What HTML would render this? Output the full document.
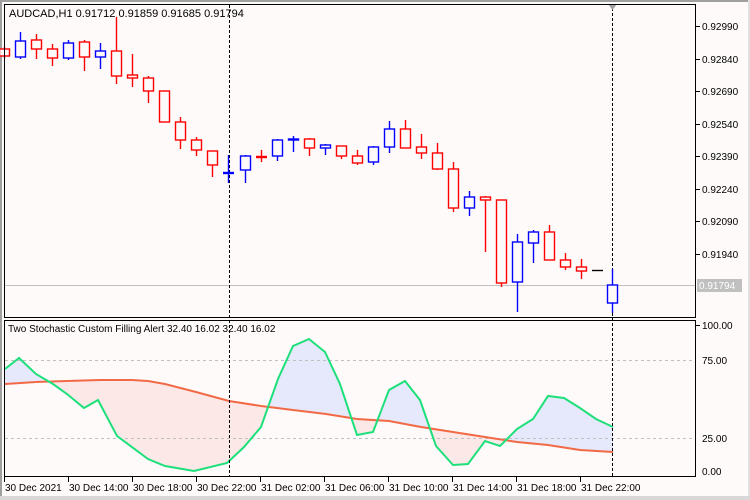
<!DOCTYPE html>
<html><head><meta charset="utf-8"><style>
html,body{margin:0;padding:0;background:#fffafa;}
svg{display:block;font-family:"Liberation Sans","DejaVu Sans",sans-serif;}
</style></head><body>
<svg width="750" height="500" xmlns="http://www.w3.org/2000/svg">
<rect width="750" height="500" fill="#fffafa"/>
<rect x="0" y="0" width="750" height="2" fill="#a0a0a0"/>
<rect x="0" y="0" width="2" height="500" fill="#a0a0a0"/>
<rect x="748" y="0" width="2" height="500" fill="#e0e0e0"/>
<rect x="0" y="496" width="750" height="4" fill="#d8d8d8"/>
<line x1="5" y1="285.5" x2="695" y2="285.5" stroke="#c0c0c0"/>
<!-- indicator -->
<defs>
<clipPath id="above"><polygon id="ab" points=""/></clipPath>
<clipPath id="below"><polygon id="bl" points=""/></clipPath>
</defs>
<polygon id="fillB" fill="#e6e8fb" clip-path="url(#above)" points=""/>
<polygon id="fillR" fill="#fde8e8" clip-path="url(#below)" points=""/>
<line x1="5" y1="360.5" x2="695" y2="360.5" stroke="#c0c0c0" stroke-dasharray="3,3"/>
<line x1="5" y1="438.5" x2="695" y2="438.5" stroke="#c0c0c0" stroke-dasharray="3,3"/>
<polyline id="red" fill="none" stroke="#f26a45" stroke-width="2" points=""/>
<polyline id="grn" fill="none" stroke="#1de07a" stroke-width="2" points=""/>
<!-- vertical dashed -->
<line x1="229.5" y1="5" x2="229.5" y2="476" stroke="#000" stroke-dasharray="3,2"/>
<line x1="612.5" y1="8" x2="612.5" y2="476" stroke="#000" stroke-dasharray="3,2"/>
<polygon points="608,4 617,4 612.5,10" fill="#a0a0a0"/>
<!-- candles -->
<g stroke-width="1.4" fill="none" id="c"></g>
<!-- frames -->
<rect x="4.5" y="4.5" width="691" height="313" fill="none" stroke="#000"/>
<rect x="4.5" y="320.5" width="691" height="156" fill="none" stroke="#000"/>
<text x="9" y="17" font-size="11">AUDCAD,H1  0.91712 0.91859 0.91685 0.91794</text>
<g font-size="10" fill="#000">
<g stroke="#000">
<line x1="696" y1="26.5" x2="700" y2="26.5"/><line x1="696" y1="59.5" x2="700" y2="59.5"/><line x1="696" y1="91.5" x2="700" y2="91.5"/><line x1="696" y1="124.5" x2="700" y2="124.5"/><line x1="696" y1="156.5" x2="700" y2="156.5"/><line x1="696" y1="189.5" x2="700" y2="189.5"/><line x1="696" y1="221.5" x2="700" y2="221.5"/><line x1="696" y1="254.5" x2="700" y2="254.5"/>
<line x1="696" y1="325.5" x2="700" y2="325.5"/>
</g>
<text x="702" y="30">0.92990</text><text x="702" y="63">0.92840</text><text x="702" y="95">0.92690</text><text x="702" y="128">0.92540</text><text x="702" y="160">0.92390</text><text x="702" y="193">0.92240</text><text x="702" y="225">0.92090</text><text x="702" y="258">0.91940</text>
<rect x="697" y="279" width="45" height="13" fill="#c0c0c0"/>
<text x="699" y="289" fill="#fff">0.91794</text>
<text x="702" y="329">100.00</text><text x="702" y="364">75.00</text><text x="702" y="442">25.00</text><text x="702" y="475">0.00</text>
</g>
<text x="8" y="332" font-size="10">Two Stochastic Custom Filling Alert 32.40 16.02 32.40 16.02</text>
<g stroke="#000" id="ticks"></g>
<g font-size="10" id="dates"></g>
<script>
var ns="http://www.w3.org/2000/svg";
var C=[[4,'r',47,49,56,58],[20,'b',32,41,57,59],[36,'r',34,40,49,59],[52,'r',44,49,58,66],[68,'b',40,43,58,60],[84,'r',40,42,57,71],[100,'b',43,51,57,69],[116,'r',17,51,76,84],[132,'r',54,75,78,87],[148,'r',76,78,91,103],[164,'r',91,91,122,122],[180,'r',117,122,140,149],[196,'r',137,140,150,156],[212,'r',151,151,165,177],[228,'b',155,172,172,183],[245,'b',155,156,170,183],[261,'r',150,156,156,162],[277,'b',139,140,156,161],[293,'b',136,139,140,152],[309,'r',138,139,148,156],[325,'b',144,145,148,155],[341,'r',146,146,156,159],[357,'r',150,156,163,165],[373,'b',146,147,162,165],[389,'b',121,129,147,153],[405,'r',120,129,148,148],[421,'r',134,147,153,159],[437,'r',143,153,169,170],[453,'r',162,169,208,212],[469,'b',191,197,208,216],[485,'r',196,197,200,252],[501,'r',200,200,283,287],[517,'b',234,242,282,312],[533,'b',230,232,243,263],[549,'r',225,232,260,260],[565,'r',253,260,267,270],[581,'r',259,267,271,279],[597,'k',270,270,270,270],[612,'b',269,285,303,313]];
var g=document.getElementById('c');
C.forEach(function(c){var x=c[0]+0.5,col=c[1]=='r'?'#ff0000':c[1]=='b'?'#0000ff':'#000';
function L(x1,y1,x2,y2){var l=document.createElementNS(ns,'line');l.setAttribute('x1',x1);l.setAttribute('y1',y1);l.setAttribute('x2',x2);l.setAttribute('y2',y2);l.setAttribute('stroke',col);l.setAttribute('stroke-width','1.4');g.appendChild(l);}
if(c[4]-c[3]<1){L(x,c[2],x,c[5]);L(x-5.5,c[3]+.5,x+5.5,c[3]+.5);if(c[1]!='k')L(x-5.5,c[3]+1.5,x+5.5,c[3]+1.5);}
else{L(x,c[2],x,c[3]);L(x,c[4],x,c[5]);var r=document.createElementNS(ns,'rect');r.setAttribute('x',x-5);r.setAttribute('y',c[3]);r.setAttribute('width',10);r.setAttribute('height',c[4]-c[3]);r.setAttribute('fill','#fffafa');r.setAttribute('stroke',col);r.setAttribute('stroke-width','1.4');g.appendChild(r);}
});
var G=[[5,369],[19,358],[36,374],[53,384],[67,394],[84,408],[98,400],[117,436],[148,459],[165,466],[194,471],[227,463],[244,447],[261,427],[278,379],[293,346],[309,339],[325,352],[340,384],[357,435],[373,432],[389,390],[405,381],[420,400],[436,446],[453,465],[468,464],[485,441],[500,446],[517,429],[533,419],[548,396],[564,398],[580,408],[596,419],[613,427]];
var R=[[5,384],[36,382],[67,381],[100,380],[132,380],[148,381],[165,384],[196,392],[229,401],[261,406],[293,410],[326,414],[357,419],[389,421],[421,427],[453,432],[485,437],[517,442],[548,445],[580,450],[613,452]];
function s(a){return a.map(function(p){return p[0]+','+p[1]}).join(' ');}
document.getElementById('grn').setAttribute('points',s(G));
document.getElementById('red').setAttribute('points',s(R));
var between=s(G)+' '+s(R.slice().reverse());
document.getElementById('fillB').setAttribute('points',between);
document.getElementById('fillR').setAttribute('points',between);
document.getElementById('ab').setAttribute('points','5,321 '+s(R)+' 613,321');
document.getElementById('bl').setAttribute('points','5,476 '+s(R)+' 613,476');
var t=document.getElementById('ticks'),d=document.getElementById('dates');
var labs=['30 Dec 2021','30 Dec 14:00','30 Dec 18:00','30 Dec 22:00','31 Dec 02:00','31 Dec 06:00','31 Dec 10:00','31 Dec 14:00','31 Dec 18:00','31 Dec 22:00'];
labs.forEach(function(l,i){var x=4+64*i;var ln=document.createElementNS(ns,'line');ln.setAttribute('x1',x+.5);ln.setAttribute('x2',x+.5);ln.setAttribute('y1',477);ln.setAttribute('y2',482);t.appendChild(ln);var tx=document.createElementNS(ns,'text');tx.setAttribute('x',x+1);tx.setAttribute('y',491);tx.textContent=l;d.appendChild(tx);});
</script>
</svg>
</body></html>
